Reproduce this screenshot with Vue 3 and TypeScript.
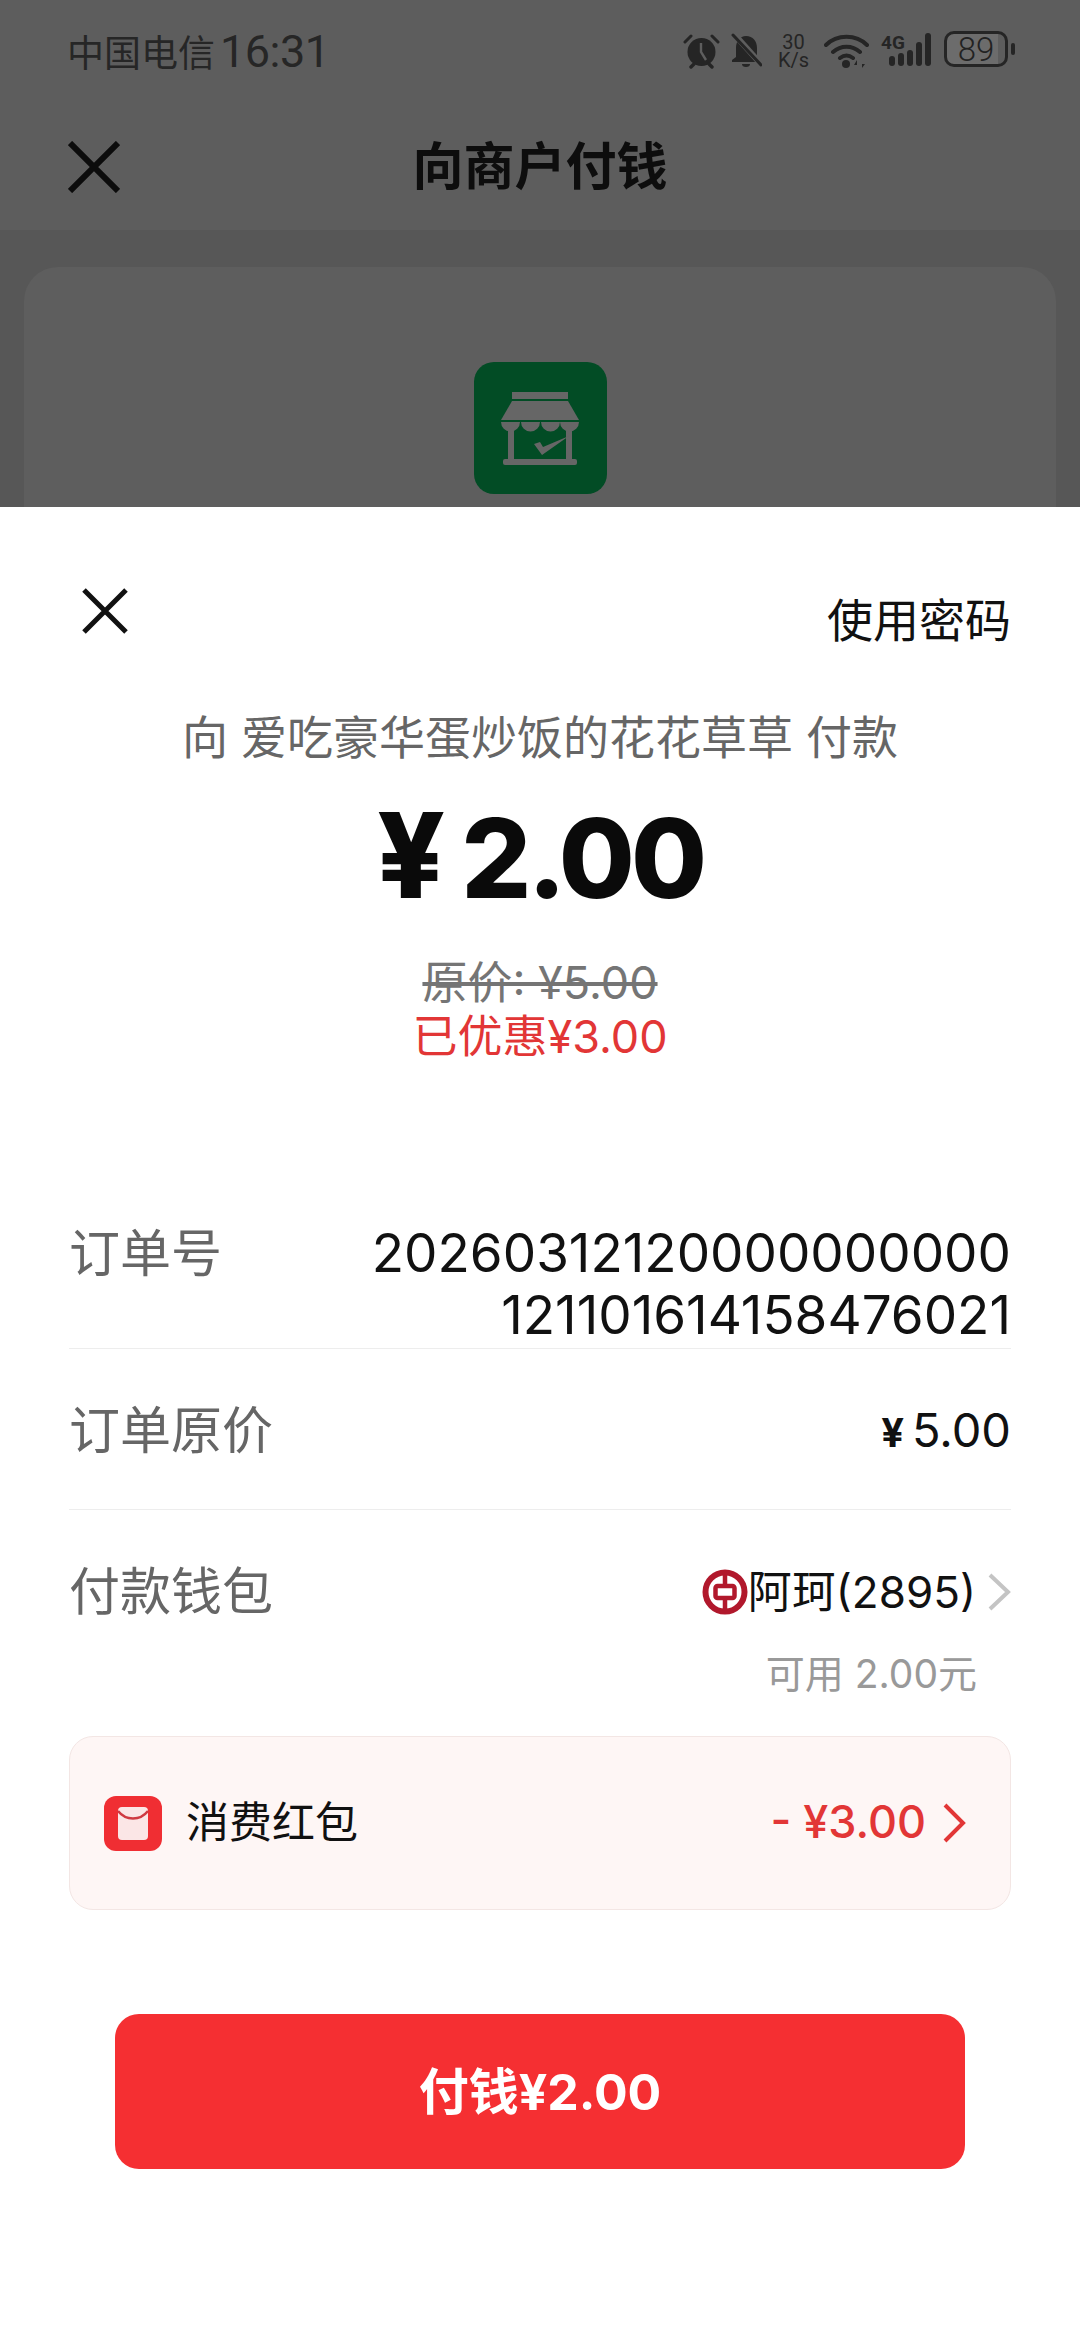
<template>
  <div class="screen">
    <div class="behind">
      <div class="status">
        <span class="carrier">中国电信<em>16:31</em></span>
        <div class="status-icons">
          <svg width="37" height="36" viewBox="0 0 37 36">
            <circle cx="18.5" cy="19" r="14" fill="#252525" />
            <path d="M18 10v9l5 8" fill="none" stroke="#5e5e5e" stroke-width="2.4" />
            <path d="M2 9l6-6M35 9l-6-6" stroke="#252525" stroke-width="3" stroke-linecap="round" />
            <path d="M8 34l3-3M29 34l-3-3" stroke="#252525" stroke-width="3.4" stroke-linecap="round" />
          </svg>
          <svg width="31" height="36" viewBox="0 0 31 36">
            <path d="M15 3c7 0 11 5 11 12v9l4 4v1H1v-2l4-3v-9C5 8 9 3 15 3z" fill="#252525" />
            <path d="M11 31h8a4 3 0 0 1-8 0z" fill="#252525" />
            <path d="M3 1l27 30" stroke="#5e5e5e" stroke-width="6" />
            <path d="M2 2l28 30" stroke="#252525" stroke-width="3" stroke-linecap="round" />
          </svg>
          <div class="speed"><span>30</span><span>K/s</span></div>
          <svg width="45" height="36" viewBox="0 0 45 36">
            <path d="M2 12C13 1 32 1 43 12M9 19c8-7 19-7 27 0M16 25c4-3 9-3 13 0" fill="none" stroke="#252525" stroke-width="4" stroke-linecap="round" />
            <circle cx="22" cy="31" r="4" fill="#252525" />
            <path d="M33 34v-7l-3 5h3zM38 27v8l3-4h-3z" fill="#252525" />
          </svg>
          <div class="signal">
            <span class="net">4G</span>
            <i class="bar b1"></i><i class="bar b2"></i><i class="bar b3"></i><i class="bar b4"></i><i class="bar b5"></i>
          </div>
          <div class="battery">
            <div class="cell"><span>89</span></div>
            <i class="cap"></i>
          </div>
        </div>
      </div>

      <div class="nav">
        <svg class="nav-close" width="52" height="52" viewBox="0 0 52 52">
          <path d="M2 2l48 48M50 2L2 50" stroke="#0c0c0c" stroke-width="6" />
        </svg>
        <h1 class="nav-title">向商户付钱</h1>
      </div>

      <div class="merchant-card">
        <div class="merchant-logo">
          <svg width="78" height="73" viewBox="0 0 78 73" fill="#666">
            <rect x="11" y="0" width="56" height="7" />
            <path d="M11 9h56l11 19H0z" />
            <path d="M0 30h19a9.500 9.500 0 0 1-19 0zM20 30h19a9.500 9.500 0 0 1-19 0zM40 30h19a9.500 9.500 0 0 1-19 0zM59 30h19a9.500 9.500 0 0 1-19 0z" />
            <rect x="7" y="38" width="6" height="30" />
            <rect x="65" y="38" width="6" height="30" />
            <rect x="2" y="67" width="74" height="6" rx="2" />
            <path d="M33 52l6-2 3 5 26-11-27 19z" />
          </svg>
        </div>
      </div>
    </div>

    <div class="sheet">
      <div class="sheet-head">
        <svg class="sheet-close" width="46" height="46" viewBox="0 0 46 46">
          <path d="M2 2l42 42M44 2L2 44" stroke="#111" stroke-width="5" />
        </svg>
        <span class="use-pwd">使用密码</span>
      </div>

      <p class="pay-to">向 爱吃豪华蛋炒饭的花花草草 付款</p>
      <p class="amount"><span class="amount-yen">¥</span> 2.00</p>
      <p class="origin">原价: ¥5.00</p>
      <p class="saved">已优惠¥3.00</p>

      <div class="row order-row">
        <span class="label">订单号</span>
        <span class="value order-no">20260312120000000000<br />121101614158476021</span>
      </div>
      <div class="row price-row">
        <span class="label">订单原价</span>
        <span class="value price"><b class="value-yen">¥</b>5.00</span>
      </div>
      <div class="wallet-row">
        <div class="wallet-line">
          <span class="label">付款钱包</span>
          <div class="wallet">
            <svg width="46" height="46" viewBox="0 0 46 46" fill="none" stroke="#b1182c">
              <circle cx="23" cy="23" r="19.500" stroke-width="6" />
              <rect x="13.500" y="17" width="19" height="12" rx="2" stroke-width="4.500" />
              <path d="M23 4v13M23 29v13" stroke-width="4.500" />
            </svg>
            <span class="wallet-name">阿珂(2895)</span>
            <svg class="wallet-arrow" width="24" height="40" viewBox="0 0 24 40">
              <path d="M3 3l18 17L3 37" fill="none" stroke="#c4c4c4" stroke-width="4" />
            </svg>
          </div>
        </div>
        <span class="balance">可用 2.00元</span>
      </div>

      <div class="coupon">
        <svg width="58" height="55" viewBox="0 0 58 55">
          <rect width="58" height="55" rx="12" fill="#f02e33" />
          <rect x="14" y="11" width="30" height="33" rx="4" fill="#fbe6e6" />
          <path d="M14 15c8 10 22 10 30 0" fill="none" stroke="#cf3a42" stroke-width="2.500" />
        </svg>
        <span class="coupon-name">消费红包</span>
        <span class="coupon-off">- ¥3.00</span>
        <svg width="24" height="42" viewBox="0 0 24 42">
          <path d="M3 3l18 18L3 39" fill="none" stroke="#e23636" stroke-width="4" />
        </svg>
      </div>

      <button class="pay-btn">付钱¥2.00</button>
    </div>
  </div>
</template>

<script setup lang="ts">
</script>

<style>
html, body { margin: 0; background: #fff; }
</style>

<style scoped>
.screen {
  width: 1080px;
  height: 2340px;
  display: flex;
  flex-direction: column;
  overflow: hidden;
  font-family: Inter, "Noto Sans CJK SC", sans-serif;
}
p, h1 { margin: 0; }

/* dimmed page under the sheet */
.behind {
  height: 507px;
  flex: none;
  overflow: hidden;
  background: #575757;
}
.status {
  height: 104px;
  box-sizing: border-box;
  padding: 29px 65px 0 67px;
  display: flex;
  justify-content: space-between;
  background: #5d5d5d;
}
.carrier {
  font-size: 37px;
  line-height: 46px;
  color: #262626;
}
.carrier em {
  margin-left: 5px;
  font-style: normal;
  font-family: Roboto, sans-serif;
  font-size: 45px;
  letter-spacing: -0.5px;
}
.status-icons {
  display: flex;
  align-items: flex-start;
  height: 40px;
  padding-top: 4px;
}
.status-icons > * { flex: none; }
.status-icons > svg:nth-child(2) { margin-left: 11px; }
.speed {
  display: flex;
  flex-direction: column;
  align-items: center;
  margin: 0 15px 0 16px;
  font-family: Roboto, sans-serif;
  font-size: 20px;
  line-height: 18px;
  color: #252525;
}
.signal {
  position: relative;
  display: flex;
  align-items: flex-end;
  gap: 3px;
  height: 33px;
  width: 50px;
  margin-left: 12px;
  justify-content: flex-end;
}
.net {
  position: absolute;
  left: 0;
  top: 0;
  font-family: Roboto, sans-serif;
  font-size: 19px;
  line-height: 19px;
  font-weight: 700;
  color: #252525;
}
.bar {
  width: 6px;
  background: #252525;
  border-radius: 3px;
}
.b1 { height: 10px; }
.b2 { height: 13px; }
.b3 { height: 16px; }
.b4 { height: 24px; }
.b5 { height: 33px; }
.battery {
  display: flex;
  align-items: center;
  margin-left: 13px;
  margin-top: -2px;
}
.cell {
  width: 64px;
  height: 36px;
  box-sizing: border-box;
  border: 3px solid #252525;
  border-radius: 10px;
  background: linear-gradient(90deg, #6c6c6c 88%, #5d5d5d 88%);
  display: flex;
  align-items: center;
  justify-content: center;
  font-family: Roboto, sans-serif;
  font-size: 33px;
  font-weight: 300;
  color: #222;
}
.cap {
  width: 4px;
  height: 12px;
  margin-left: 3px;
  border-radius: 2px;
  background: #252525;
}
.nav {
  height: 126px;
  position: relative;
  display: flex;
  align-items: center;
  justify-content: center;
  background: #5d5d5d;
}
.nav-close {
  position: absolute;
  left: 68px;
  top: 37px;
}
.nav-title {
  font-size: 51px;
  font-weight: 700;
  color: #0d0d0d;
  margin-top: -8px;
}
.merchant-card {
  margin: 37px 24px 0;
  height: 400px;
  padding-top: 95px;
  box-sizing: border-box;
  background: #5e5e5e;
  border-radius: 34px;
}
.merchant-logo {
  width: 133px;
  height: 132px;
  margin: 0 auto;
  padding-top: 30px;
  box-sizing: border-box;
  display: flex;
  justify-content: center;
  align-items: flex-start;
  border-radius: 20px;
  background: #024c25;
}

/* payment sheet */
.sheet {
  flex: 1;
  padding: 81px 69px 0;
  background: #fff;
}
.sheet-head {
  display: flex;
  justify-content: space-between;
  height: 56px;
}
.sheet-close { margin-left: 13px; }
.use-pwd {
  font-size: 46px;
  line-height: 56px;
  margin-top: 4px;
  color: #111;
}
.pay-to {
  margin-top: 63px;
  font-size: 46px;
  line-height: 60px;
  text-align: center;
  color: #666;
}
.amount {
  font-size: 110px;
  line-height: 130px;
  font-weight: 800;
  letter-spacing: -4px;
  text-align: center;
  color: #0a0a0a;
  margin-top: 23px;
}
.amount-yen { font-size: 118px; }
.origin {
  margin-top: 32px;
  font-size: 45px;
  line-height: 55px;
  text-align: center;
  color: #757575;
  text-decoration: line-through;
}
.saved {
  font-size: 45px;
  line-height: 54px;
  text-align: center;
  color: #e23636;
}
.row {
  display: flex;
  justify-content: space-between;
  border-bottom: 1px solid #ededed;
}
.label {
  font-size: 51px;
  line-height: 60px;
  color: #666;
}
.value {
  font-size: 53px;
  line-height: 62px;
  color: #111;
  text-align: right;
}
.value.price { font-size: 47px; }
.value-yen {
  font-size: 40px;
  margin-right: 8px;
}
.order-row {
  margin-top: 160px;
  height: 125px;
  box-sizing: border-box;
}
.order-no { margin-top: -2px; }
.price-row {
  height: 161px;
  box-sizing: border-box;
  align-items: center;
  padding-top: 4px;
}
.wallet-row {
  display: flex;
  flex-direction: column;
  padding-top: 52px;
}
.wallet-line {
  display: flex;
  justify-content: space-between;
  align-items: center;
}
.wallet {
  display: flex;
  align-items: center;
}
.wallet-name {
  font-size: 44px;
  line-height: 60px;
  color: #111;
}
.wallet-arrow { margin-left: 11px; }
.balance {
  align-self: flex-end;
  margin-top: 27px;
  margin-right: 34px;
  font-size: 39px;
  line-height: 50px;
  color: #999;
}
.coupon {
  margin-top: 37px;
  height: 174px;
  box-sizing: border-box;
  padding: 0 44px 0 34px;
  display: flex;
  align-items: center;
  background: #fef6f5;
  border: 1px solid #f3e6e4;
  border-radius: 24px;
}
.coupon-name {
  margin-left: 24px;
  margin-bottom: 8px;
  font-size: 43px;
  color: #111;
}
.coupon-off {
  margin-left: auto;
  margin-right: 16px;
  margin-bottom: 4px;
  font-size: 45px;
  font-weight: 500;
  color: #e23636;
}
.pay-btn {
  display: block;
  width: 850px;
  height: 155px;
  margin: 104px auto 0;
  padding-bottom: 8px;
  border: none;
  border-radius: 24px;
  background: #f52f32;
  color: #fff;
  font-family: inherit;
  font-size: 50px;
  font-weight: 700;
}
</style>
